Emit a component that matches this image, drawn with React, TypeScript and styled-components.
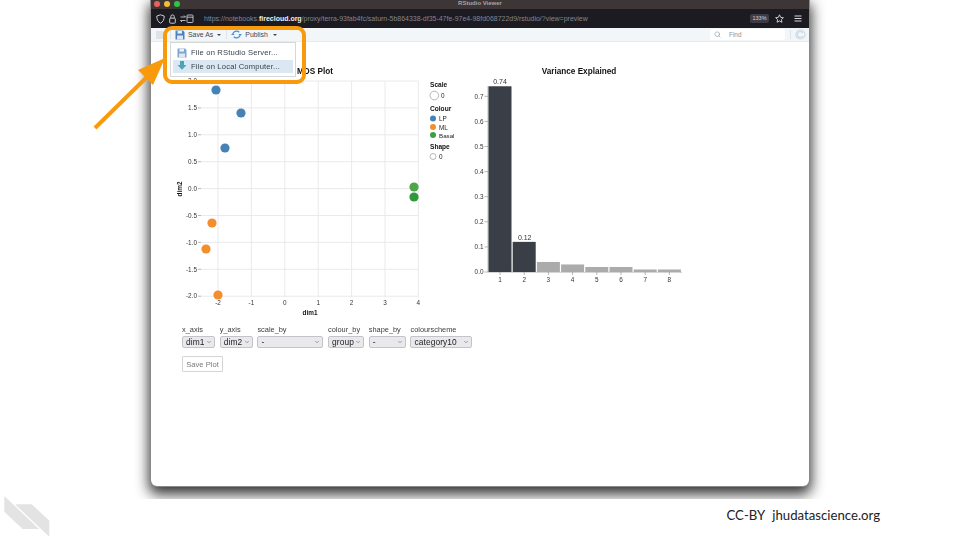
import React from 'react'
import styled, { createGlobalStyle } from 'styled-components'
import { ChevronDown, Search } from 'lucide-react'

const GlobalStyle = createGlobalStyle`
  html, body {
    margin: 0;
    padding: 0;
    background: #fff;
    font-family: "Liberation Sans", Arial, sans-serif;
  }
`

const Slide = styled.div`
  position: relative;
  width: 960px;
  height: 540px;
  overflow: hidden;
  background: #fff;
`

const ShotArea = styled.div`
  height: 499px;
  overflow: hidden;
  display: flex;
  justify-content: center;
`

const BrowserWindow = styled.div`
  position: relative;
  width: 658px;
  height: 486px;
  background: #fff;
  border-radius: 0 0 6px 6px;
  box-shadow: 0 0 0 1px #8a8a8a, 0 6px 14px 2px rgba(0, 0, 0, 0.82);
  filter: blur(0.35px);
`

const TitleBar = styled.div`
  height: 9px;
  background: #3d3536;
  display: flex;
  align-items: center;
  position: relative;
  padding-left: 3px;
  gap: 4px;
`

const Light = styled.span<{ $color: string }>`
  width: 6px;
  height: 6px;
  border-radius: 50%;
  background: ${({ $color }) => $color};
  margin-top: -2px;
`

const WindowTitle = styled.span`
  position: absolute;
  left: 0;
  right: 0;
  top: 0;
  text-align: center;
  font-size: 6px;
  line-height: 7px;
  font-weight: 700;
  color: #a9a3a3;
`

const UrlBar = styled.div`
  height: 19px;
  background: #1c1b22;
  display: flex;
  align-items: center;
  padding: 0 7px 0 5px;
  color: #c9c9cf;
`

const UrlIcons = styled.div`
  display: flex;
  align-items: center;
  gap: 4px;
  width: 48px;
`

const UrlText = styled.div`
  flex: 1;
  font-size: 6.98px;
  color: #85858d;
  white-space: nowrap;

  b {
    font-weight: 700;
    color: #f0f0f2;
  }
`

const ZoomBadge = styled.span`
  width: 19px;
  height: 9px;
  line-height: 9px;
  border-radius: 2px;
  background: #3c3b46;
  color: #d5d5da;
  font-size: 5.5px;
  text-align: center;
  margin-right: 6px;
`

const UrlRight = styled.div`
  display: flex;
  align-items: center;
  gap: 10px;
`

const Toolbar = styled.div`
  height: 14px;
  background: #f2f6f8;
  border-bottom: 1px solid #e7ebee;
  box-sizing: border-box;
  display: flex;
  align-items: center;
  padding: 0 3px 0 4px;
  font-size: 6.9px;
  color: #3c4650;
`

const ToolButton = styled.div`
  display: flex;
  align-items: center;
  gap: 3px;
`

const Caret = styled.span<{ $gap?: number }>`
  width: 0;
  height: 0;
  margin-left: ${({ $gap }) => $gap ?? 1}px;
  border-left: 2px solid transparent;
  border-right: 2px solid transparent;
  border-top: 2px solid #3c4650;
`

const ToolSep = styled.span<{ $after?: number }>`
  width: 1px;
  height: 9px;
  background: #dfe4e8;
  margin: 0 ${({ $after }) => $after ?? 4}px 0 5px;
`

const FindBox = styled.div`
  margin-left: auto;
  width: 75px;
  height: 11px;
  background: #fff;
  border-radius: 2px;
  display: flex;
  align-items: center;
  gap: 8px;
  padding-left: 4px;
  box-sizing: border-box;
  font-size: 6.4px;
  color: #8b9299;
`

const Menu = styled.div`
  position: absolute;
  left: 19px;
  top: 42px;
  width: 126px;
  height: 35px;
  box-sizing: border-box;
  background: #fff;
  border: 1px solid #d7d7d7;
  padding: 3px 2px;
  display: flex;
  flex-direction: column;
  font-size: 7.6px;
  color: #39424b;
  z-index: 2;
`

const MenuItem = styled.div<{ $active?: boolean }>`
  height: 14px;
  display: flex;
  align-items: center;
  gap: 4px;
  padding-left: 4px;
  letter-spacing: 0.18px;
  background: ${({ $active }) => ($active ? '#dbe8f3' : 'transparent')};
`

const Highlight = styled.div`
  position: absolute;
  left: 12px;
  top: 26px;
  width: 143px;
  height: 58px;
  box-sizing: border-box;
  border: 4px solid #f99a0c;
  border-radius: 9px;
  z-index: 3;
`

const Content = styled.div`
  padding: 18px 0 0 19px;
`

const ChartRow = styled.div`
  display: flex;
  height: 260px;
`

const Chart = styled.svg`
  display: block;
  flex: none;
  font-family: "Liberation Sans", Arial, sans-serif;
`

const FormRow = styled.div`
  display: flex;
  margin: 5px 0 0 12px;
  gap: 4.7px;
`

const Field = styled.div<{ $width: number }>`
  width: ${({ $width }) => $width}px;
  display: flex;
  flex-direction: column;
  gap: 1px;
  font-size: 7.4px;
  line-height: 10px;
  color: #3c3c3c;
  white-space: nowrap;
`

const SelectBox = styled.div`
  height: 12px;
  box-sizing: border-box;
  border: 1px solid #c4c4c8;
  border-radius: 2px;
  background: #e9e9ed;
  display: flex;
  align-items: center;
  justify-content: space-between;
  padding: 0 2px 0 3px;
  font-size: 8.4px;
  color: #222;
  letter-spacing: 0.1px;
`

const SavePlot = styled.button`
  display: block;
  margin: 8px 0 0 12px;
  width: 41px;
  height: 16px;
  padding: 0;
  background: #fff;
  border: 1px solid #d4d4d4;
  border-radius: 1px;
  font-family: inherit;
  font-size: 7.6px;
  color: #7a7a7a;
`

const ArrowLayer = styled.svg`
  position: absolute;
  left: 80px;
  top: 45px;
  z-index: 4;
`

const Footer = styled.div`
  height: 41px;
  display: flex;
  align-items: center;
  justify-content: flex-end;
  padding: 0 80px 9px 0;
  box-sizing: border-box;
  font-family: Lato, "Liberation Sans", sans-serif;
  font-size: 13.2px;
  color: #222;
  gap: 7px;
`

const LogoMark = styled.svg`
  position: absolute;
  left: 4px;
  top: 496px;
`

const fields = [
  { label: 'x_axis', value: 'dim1', width: 33 },
  { label: 'y_axis', value: 'dim2', width: 33 },
  { label: 'scale_by', value: '-', width: 66 },
  { label: 'colour_by', value: 'group', width: 36 },
  { label: 'shape_by', value: '-', width: 37 },
  { label: 'colourscheme', value: 'category10', width: 62 },
]

const xTicks = [-2, -1, 0, 1, 2, 3, 4]
const yTicks = ['2.0', '1.5', '1.0', '0.5', '0.0', '-0.5', '-1.0', '-1.5', '-2.0']
const points = [
  { x: 216, y: 90, c: '#4682b4' },
  { x: 241, y: 113, c: '#4682b4' },
  { x: 225, y: 148, c: '#4682b4' },
  { x: 212, y: 223, c: '#f28e2b' },
  { x: 206, y: 249, c: '#f28e2b' },
  { x: 218, y: 295, c: '#f28e2b' },
  { x: 414, y: 187, c: '#4ea54a' },
  { x: 414, y: 197, c: '#2f9a3b' },
]
const variance = [0.74, 0.12, 0.04, 0.03, 0.02, 0.02, 0.01, 0.01]

function FloppyIcon({ color = '#4f8fc9' }: { color?: string }) {
  return (
    <svg width="10" height="10" viewBox="0 0 10 10">
      <path d="M0.5 0.5h7.5l1.5 1.5v7.5h-9z" fill={color} />
      <rect x="2.5" y="0.8" width="4.5" height="2.8" fill="#e8f0f7" />
      <rect x="2" y="5.5" width="6" height="4" fill="#dfe8f0" />
    </svg>
  )
}

function PublishIcon() {
  return (
    <svg width="11" height="9" viewBox="0 0 12 9" fill="none" stroke="#3f8fd6" strokeWidth="1.3">
      <path d="M2 4a4 3.2 0 0 1 7-2" />
      <path d="M10 5a4 3.2 0 0 1-7 2" />
      <path d="M0.5 4.5h3M8.5 4.5h3" />
    </svg>
  )
}

function DownloadIcon() {
  return (
    <svg width="10" height="10" viewBox="0 0 10 10">
      <rect x="3" y="0" width="4" height="4.5" fill="#4aa6b5" />
      <path d="M0.5 4h9L5 8.8z" fill="#4aa6b5" />
    </svg>
  )
}

function MdsChart() {
  return (
    <Chart width={290} height={260} viewBox="170 60 290 260">
      {xTicks.map((t, i) => {
        const x = 218 + i * 33.4
        return (
          <g key={t}>
            <line x1={x} x2={x} y1={81} y2={297} stroke="#e8e8e8" strokeWidth={0.9} />
            <text x={x} y={305} fontSize={6.4} textAnchor="middle" fill="#333">{t}</text>
          </g>
        )
      })}
      {yTicks.map((t, i) => {
        const y = 81 + i * 26.9
        return (
          <g key={t}>
            <line x1={201} x2={418.4} y1={y} y2={y} stroke="#e8e8e8" strokeWidth={0.9} />
            <line x1={198} x2={201} y1={y} y2={y} stroke="#999" strokeWidth={0.7} />
            <text x={197} y={y + 2.2} fontSize={6.4} textAnchor="end" fill="#333">{t}</text>
          </g>
        )
      })}
      <text x={315} y={74} fontSize={8.2} fontWeight={700} textAnchor="middle" fill="#111">MDS Plot</text>
      <text x={310} y={315} fontSize={6.4} fontWeight={700} textAnchor="middle" fill="#111">dim1</text>
      <text transform="translate(182 189) rotate(-90)" fontSize={6.4} fontWeight={700} textAnchor="middle" fill="#111">dim2</text>
      {points.map((p) => (
        <circle key={`${p.x}-${p.y}`} cx={p.x} cy={p.y} r={4.6} fill={p.c} />
      ))}
      <text x={430} y={87} fontSize={6.6} fontWeight={700} fill="#111">Scale</text>
      <circle cx={434.3} cy={95.5} r={4.3} fill="#fff" stroke="#888" strokeWidth={0.6} />
      <text x={441} y={98} fontSize={6.4} fill="#222">0</text>
      <text x={430} y={111} fontSize={6.6} fontWeight={700} fill="#111">Colour</text>
      <circle cx={433} cy={118.5} r={3} fill="#4682b4" />
      <text x={439} y={121} fontSize={6.4} fill="#222">LP</text>
      <circle cx={433} cy={127} r={3} fill="#f28e2b" />
      <text x={439} y={129.5} fontSize={6.4} fill="#222">ML</text>
      <circle cx={433} cy={135} r={3} fill="#3f9f45" />
      <text x={439} y={137.5} fontSize={6.2} fill="#222">Basal</text>
      <text x={430} y={149} fontSize={6.6} fontWeight={700} fill="#111">Shape</text>
      <circle cx={433} cy={156.5} r={3} fill="#fff" stroke="#888" strokeWidth={0.6} />
      <text x={439} y={159} fontSize={6.4} fill="#222">0</text>
    </Chart>
  )
}

function VarianceChart() {
  return (
    <Chart width={230} height={260} viewBox="460 60 230 260">
      <text x={579} y={74} fontSize={8.2} fontWeight={700} textAnchor="middle" fill="#111">Variance Explained</text>
      <line x1={488} x2={488} y1={86} y2={272} stroke="#bbb" strokeWidth={1} />
      <line x1={488} x2={682} y1={272.3} y2={272.3} stroke="#bbb" strokeWidth={0.8} />
      {[0, 1, 2, 3, 4, 5, 6, 7].map((t) => {
        const y = 272 - t * 25.1
        return (
          <g key={t}>
            <line x1={484.5} x2={488} y1={y} y2={y} stroke="#999" strokeWidth={0.7} />
            <text x={483.5} y={y + 2.2} fontSize={6.4} textAnchor="end" fill="#333">{(t / 10).toFixed(1)}</text>
          </g>
        )
      })}
      {variance.map((v, i) => {
        const x = 488.5 + i * 24.2
        const h = v * 251
        return (
          <g key={i}>
            <rect x={x} y={272 - h} width={23} height={h} fill={i < 2 ? '#3a3e46' : '#ababab'} />
            <line x1={x + 11.5} x2={x + 11.5} y1={272} y2={275} stroke="#999" strokeWidth={0.7} />
            <text x={x + 11.5} y={282} fontSize={6.4} textAnchor="middle" fill="#333">{i + 1}</text>
          </g>
        )
      })}
      <text x={500} y={83.5} fontSize={7} textAnchor="middle" fill="#333">0.74</text>
      <text x={524.7} y={240} fontSize={7} textAnchor="middle" fill="#333">0.12</text>
    </Chart>
  )
}

export default function App() {
  return (
    <Slide>
      <GlobalStyle />
      <ShotArea>
        <BrowserWindow>
          <TitleBar>
            <Light $color="#ee5f57" />
            <Light $color="#f5bd2f" />
            <Light $color="#2ac840" />
            <WindowTitle>RStudio Viewer</WindowTitle>
          </TitleBar>
          <UrlBar>
            <UrlIcons>
              <svg width="9" height="10" viewBox="0 0 9 10" fill="none" stroke="#c9c9cf" strokeWidth="1">
                <path d="M4.5 0.8l3.7 1.2c0 3.5-1 5.8-3.7 7.2C1.8 7.8 0.8 5.5 0.8 2z" />
              </svg>
              <svg width="7" height="10" viewBox="0 0 7 10" fill="none" stroke="#c9c9cf" strokeWidth="1">
                <rect x="0.7" y="4.2" width="5.6" height="5" rx="0.8" />
                <path d="M1.8 4.2V2.6a1.7 1.7 0 0 1 3.4 0v1.6" />
              </svg>
              <svg width="14" height="10" viewBox="0 0 14 10" fill="none" stroke="#c9c9cf" strokeWidth="0.9">
                <path d="M0.5 3h5M4 1.5l1.5 1.5M0.5 6.5h5M2 8L0.5 6.5" />
                <rect x="7" y="1" width="6" height="7.5" rx="0.8" />
                <path d="M7 3.2h6" />
              </svg>
            </UrlIcons>
            <UrlText>
              https://notebooks.<b>firecloud.org</b>/proxy/terra-93fab4fc/saturn-5b864338-df35-47fe-97e4-98fd068722d9/rstudio/?view=preview
            </UrlText>
            <ZoomBadge>133%</ZoomBadge>
            <UrlRight>
              <svg width="9" height="9" viewBox="0 0 10 10" fill="none" stroke="#d8d8dc" strokeWidth="1">
                <path d="M5 0.9l1.3 2.8 3 .4-2.2 2.1.6 3L5 7.7 2.3 9.2l.6-3L.7 4.1l3-.4z" />
              </svg>
              <svg width="8" height="7" viewBox="0 0 8 7" stroke="#d8d8dc" strokeWidth="1">
                <path d="M0.5 1h7M0.5 3.5h7M0.5 6h7" />
              </svg>
            </UrlRight>
          </UrlBar>
          <Toolbar>
            <svg width="10" height="10" viewBox="0 0 10 10" fill="#dfe3e6">
              <path d="M1 1h6l2 2v6H1z" />
            </svg>
            <ToolSep />
            <ToolButton>
              <FloppyIcon color="#4a82c0" />
              <span>Save As</span>
              <Caret />
            </ToolButton>
            <ToolSep />
            <ToolButton>
              <PublishIcon />
              <span>Publish</span>
              <Caret $gap={2} />
            </ToolButton>
            <FindBox>
              <Search size={7} color="#8b9299" />
              <span>Find</span>
            </FindBox>
            <ToolSep />
            <svg width="11" height="11" viewBox="0 0 11 11" fill="none" stroke="#cdd9e2" strokeWidth="1.2">
              <circle cx="5.5" cy="5.5" r="4.5" />
              <path d="M8 4a3 3 0 1 0 0 3" />
            </svg>
          </Toolbar>
          <Menu>
            <MenuItem>
              <FloppyIcon color="#7fa6cc" />
              <span>File on RStudio Server...</span>
            </MenuItem>
            <MenuItem $active>
              <DownloadIcon />
              <span>File on Local Computer...</span>
            </MenuItem>
          </Menu>
          <Highlight />
          <Content>
            <ChartRow>
              <MdsChart />
              <VarianceChart />
            </ChartRow>
            <FormRow>
              {fields.map((f) => (
                <Field key={f.label} $width={f.width}>
                  <span>{f.label}</span>
                  <SelectBox>
                    <span>{f.value}</span>
                    <ChevronDown size={6} color="#555" strokeWidth={2} />
                  </SelectBox>
                </Field>
              ))}
            </FormRow>
            <SavePlot type="button">Save Plot</SavePlot>
          </Content>
        </BrowserWindow>
      </ShotArea>
      <ArrowLayer width={100} height={95} viewBox="80 45 100 95">
        <path d="M95 128L150 74" stroke="#f99a0c" strokeWidth={4} fill="none" />
        <path d="M165 58L138 70L153 85z" fill="#f99a0c" />
      </ArrowLayer>
      <LogoMark width={46} height={41} viewBox="4 496 46 41" fill="#e3e3e3">
        <path d="M4.3 496v15.7L22.7 529H39z" />
        <path d="M15 504.3h16.7l17.6 16.4v16z" />
      </LogoMark>
      <Footer>
        <span>CC-BY</span>
        <span>jhudatascience.org</span>
      </Footer>
    </Slide>
  )
}
